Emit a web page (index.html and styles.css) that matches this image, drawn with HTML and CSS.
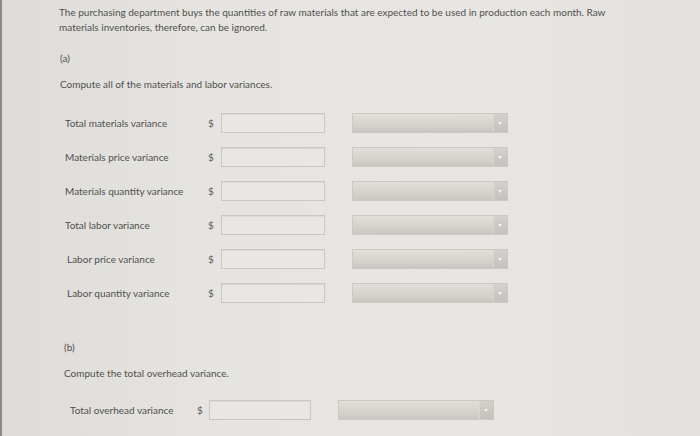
FILE: index.html
```html
<!DOCTYPE html>
<html>
    <head>
        <meta charset="UTF-8">
        <link rel="stylesheet" href="styles.css">
    </head>
    <body>
        <div class="page">
            <p class="intro">The purchasing department buys the quantities of raw materials that are expected to be used in production each month. Raw materials inventories, therefore, can be ignored.</p>

            <div class="part part-a">
                <div class="part-label">(a)</div>
                <p class="prompt">Compute all of the materials and labor variances.</p>

                <div class="rows">
                    <div class="row">
                        <span class="label">Total materials variance</span>
                        <span class="dollar">$</span>
                        <span class="field"></span>
                        <span class="select"><span class="caret"></span></span>
                    </div>
                    <div class="row">
                        <span class="label">Materials price variance</span>
                        <span class="dollar">$</span>
                        <span class="field"></span>
                        <span class="select"><span class="caret"></span></span>
                    </div>
                    <div class="row">
                        <span class="label">Materials quantity variance</span>
                        <span class="dollar">$</span>
                        <span class="field"></span>
                        <span class="select"><span class="caret"></span></span>
                    </div>
                    <div class="row">
                        <span class="label">Total labor variance</span>
                        <span class="dollar">$</span>
                        <span class="field"></span>
                        <span class="select"><span class="caret"></span></span>
                    </div>
                    <div class="row">
                        <span class="label labor">Labor price variance</span>
                        <span class="dollar">$</span>
                        <span class="field"></span>
                        <span class="select"><span class="caret"></span></span>
                    </div>
                    <div class="row">
                        <span class="label labor">Labor quantity variance</span>
                        <span class="dollar">$</span>
                        <span class="field"></span>
                        <span class="select"><span class="caret"></span></span>
                    </div>
                </div>
            </div>

            <div class="part part-b">
                <div class="part-label">(b)</div>
                <p class="prompt">Compute the total overhead variance.</p>

                <div class="rows">
                    <div class="row row-b">
                        <span class="label">Total overhead variance</span>
                        <span class="dollar">$</span>
                        <span class="field"></span>
                        <span class="select"><span class="caret"></span></span>
                    </div>
                </div>
            </div>
        </div>
    </body>
</html>
```

FILE: styles.css
```css
body {
    margin: 0;
    font-family: Lato, 'Liberation Sans', sans-serif;
    background: linear-gradient(to right, #dedcd8, #e6e4e0 30%, #e8e6e2 70%, #e3e1dd);
    color: #50504d;
    font-size: 10px;
    height: 436px;
    overflow: hidden;
}

.page {
    border-left: 2px solid #8a8985;
    height: 100%;
    padding: 5px 0 0 57px;
    box-sizing: border-box;
}

.intro {
    margin: 0;
    width: 580px;
    line-height: 15px;
}

.part-label {
    margin-top: 16px;
    line-height: 14px;
}

.prompt {
    margin: 12px 0 0;
    line-height: 14px;
}

.part-a .part-label,
.part-a .prompt {
    margin-left: 1px;
}

.rows {
    display: flex;
    flex-direction: column;
    gap: 14px;
    margin-top: 22px;
}

.row {
    display: grid;
    grid-template-columns: 143px 13px 104px 27px 156px;
    align-items: center;
    height: 20px;
    padding-left: 6px;
}

.row .select {
    grid-column: 5;
}

.label.labor {
    padding-left: 2px;
}

.dollar {
    color: #5a5a57;
}

.field {
    height: 20px;
    box-sizing: border-box;
    border: 1px solid #c9c7c1;
    background: #e9e7e3;
    box-shadow: inset 0 1px 1px rgba(0, 0, 0, 0.06);
}

.select {
    position: relative;
    height: 20px;
    box-sizing: border-box;
    border: 1px solid #cbc9c3;
    background: linear-gradient(to bottom, #e1dfda, #d2d0cb 70%, #c9c7c2);
}

.caret {
    position: absolute;
    top: 0;
    right: 0;
    bottom: 0;
    width: 13px;
    background: linear-gradient(to bottom, #d3d1cc, #c4c2bd);
    border-left: 1px solid #d9d7d2;
}

.caret::after {
    content: "";
    position: absolute;
    top: 8px;
    left: 4px;
    border-left: 2px solid transparent;
    border-right: 2px solid transparent;
    border-top: 3px solid #f4f3f0;
}

.part-b {
    margin-top: 37px;
    padding-left: 5px;
}

.part-b .part-label {
    margin-top: 0;
}

.part-b .prompt {
    margin-top: 12px;
}

.part-b .rows {
    margin-top: 20px;
}

.row-b {
    grid-template-columns: 127px 12px 102px 27px 156px;
}
```
